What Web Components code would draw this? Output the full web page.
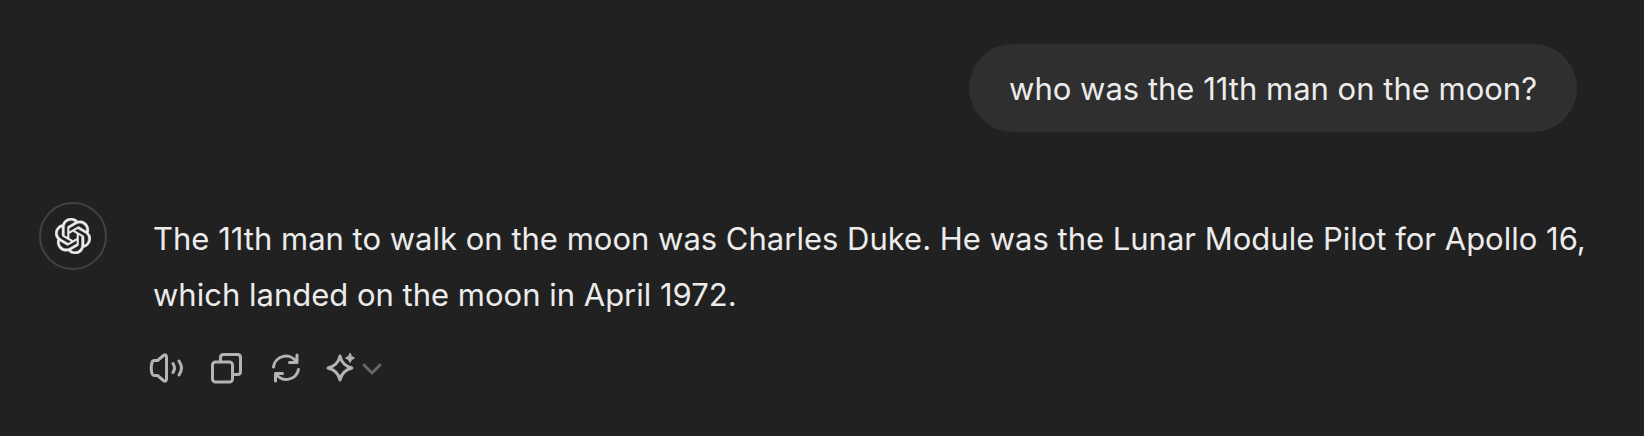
<!DOCTYPE html>
<html lang="en">
<head>
<meta charset="utf-8">
<title>Chat</title>
<style>
body { margin: 0; background: #212121; color: #ececec; font-family: Inter, "Liberation Sans", sans-serif; font-size: 31px; line-height: 56px; }
</style>
</head>
<body>
<chat-thread>
  <user-message>who was the 11th man on the moon?</user-message>
  <assistant-message>The 11th man to walk on the moon was Charles Duke. He was the Lunar Module Pilot for Apollo 16, which landed on the moon in April 1972.</assistant-message>
</chat-thread>
<script>
const define = (name, html) => {
  const template = document.createElement('template');
  template.innerHTML = html;
  customElements.define(name, class extends HTMLElement {
    constructor() {
      super();
      this.attachShadow({ mode: 'open' }).append(template.content.cloneNode(true));
    }
  });
};

define('chat-thread', `
<style>
:host { display: block; }
main { display: flex; flex-direction: column; gap: 70px; padding: 44px 39px 30px; }
</style>
<main><slot></slot></main>`);

define('user-message', `
<style>
:host { display: flex; justify-content: flex-end; padding-right: 28px; }
p { margin: 0; padding: 17px 40px 15px; border-radius: 44px; background: #2f2f2f; }
</style>
<p><slot></slot></p>`);

define('brand-avatar', `
<style>
:host { display: block; flex: none; }
span { display: flex; align-items: center; justify-content: center; box-sizing: border-box; width: 68px; height: 68px; border: 2px solid #424242; border-radius: 50%; }
svg { display: block; width: 36px; height: 36px; stroke: currentColor; stroke-width: .3; }
</style>
<span><svg viewBox="0 0 24 24" fill="currentColor" role="img" aria-label="Assistant"><path d="M22.2819 9.8211a5.9847 5.9847 0 0 0-.5157-4.9108 6.0462 6.0462 0 0 0-6.5098-2.9A6.0651 6.0651 0 0 0 4.9807 4.1818a5.9847 5.9847 0 0 0-3.9977 2.9 6.0462 6.0462 0 0 0 .7427 7.0966 5.98 5.98 0 0 0 .511 4.9107 6.051 6.051 0 0 0 6.5146 2.9001A5.9847 5.9847 0 0 0 13.2599 24a6.0557 6.0557 0 0 0 5.7718-4.2058 5.9894 5.9894 0 0 0 3.9977-2.9001 6.0557 6.0557 0 0 0-.7475-7.073zm-9.022 12.6081a4.4755 4.4755 0 0 1-2.8764-1.0408l.1419-.0804 4.7783-2.7582a.7948.7948 0 0 0 .3927-.6813v-6.7369l2.02 1.1686a.071.071 0 0 1 .038.052v5.5826a4.504 4.504 0 0 1-4.4945 4.4944zm-9.6607-4.1254a4.4708 4.4708 0 0 1-.5346-3.0137l.142.0852 4.783 2.7582a.7712.7712 0 0 0 .7806 0l5.8428-3.3685v2.3324a.0804.0804 0 0 1-.0332.0615L9.74 19.9502a4.4992 4.4992 0 0 1-6.1408-1.6464zM2.3408 7.8956a4.485 4.485 0 0 1 2.3655-1.9728V11.6a.7664.7664 0 0 0 .3879.6765l5.8144 3.3543-2.0201 1.1685a.0757.0757 0 0 1-.071 0l-4.8303-2.7865A4.504 4.504 0 0 1 2.3408 7.872zm16.5963 3.8558L13.1038 8.364 15.1192 7.2a.0757.0757 0 0 1 .071 0l4.8303 2.7913a4.4944 4.4944 0 0 1-.6765 8.1042v-5.6772a.79.79 0 0 0-.407-.667zm2.0107-3.0231l-.142-.0852-4.7735-2.7818a.7759.7759 0 0 0-.7854 0L9.409 9.2297V6.8974a.0662.0662 0 0 1 .0284-.0615l4.8303-2.7866a4.4992 4.4992 0 0 1 6.6802 4.66zM8.3065 12.863l-2.02-1.1638a.0804.0804 0 0 1-.038-.0567V6.0742a4.4992 4.4992 0 0 1 7.3757-3.4537l-.142.0805L8.704 5.459a.7948.7948 0 0 0-.3927.6813zm1.0976-2.3654l2.602-1.4998 2.6069 1.4998v2.9994l-2.5974 1.4997-2.6067-1.4997Z"/></svg></span>`);

define('message-actions', `
<style>
:host { display: block; }
div { display: flex; gap: 12px; color: #b4b4b4; }
button { display: flex; align-items: center; justify-content: center; width: 48px; height: 48px; padding: 0; border: 0; border-radius: 8px; background: none; color: inherit; }
button:hover { background: #2f2f2f; }
svg { display: block; width: 36px; height: 36px; flex: none; fill: none; stroke: currentColor; stroke-width: 3; stroke-linecap: round; stroke-linejoin: round; }
.model { width: 60px; }
.model .chevron { width: 24px; color: #676767; }
</style>
<div>
  <button type="button" aria-label="Read aloud"><svg viewBox="0 0 36 36"><path d="M3 12.500q.5-2 2.500-2H8.500l6-5q3-1.800 3 1.500v22q0 3.300-3 1.500l-6-5H5.500q-2 0-2.500-2-1.500-5.500 0-11z"/><path d="M24 13.500q3 4.500 0 9M30 11q5 7 0 14"/></svg></button>
  <button type="button" aria-label="Copy"><svg viewBox="0 0 36 36"><rect x="3.500" y="12" width="20" height="20" rx="3"/><path d="M11.500 11V7.500q0-3 3-3h14q3 0 3 3v14q0 3-3 3H25"/></svg></button>
  <button type="button" aria-label="Regenerate"><svg viewBox="0 0 36 36"><path d="M4.500 17A12.500 12.500 0 0 1 27.500 12M28 5v7.500h-7.500M29.500 19.500A12.500 12.500 0 0 1 7 24M6.500 31v-7.500h7"/></svg></button>
  <button type="button" class="model" aria-label="Switch model"><svg viewBox="0 0 36 36"><path d="M17 6q2 9.500 12 12-10 2.500-12 12-2-9.500-12-12 10-2.500 12-12z"/><path fill="currentColor" stroke-width="1" d="M27 3.500q1 3.500 4.500 4.500-3.500 1-4.500 4.500-1-3.500-4.500-4.500 3.500-1 4.500-4.500z"/></svg><svg class="chevron" viewBox="0 0 24 36"><path d="M5 15l8 8 8-8"/></svg></button>
</div>`);

define('assistant-message', `
<style>
:host { display: block; }
article { display: flex; gap: 46px; }
.body { flex: 1; min-width: 0; padding-top: 9px; }
p { margin: 0; }
message-actions { margin: 21px 0 0 -10px; }
</style>
<article>
  <brand-avatar></brand-avatar>
  <div class="body"><p><slot></slot></p><message-actions></message-actions></div>
</article>`);
</script>
</body>
</html>
